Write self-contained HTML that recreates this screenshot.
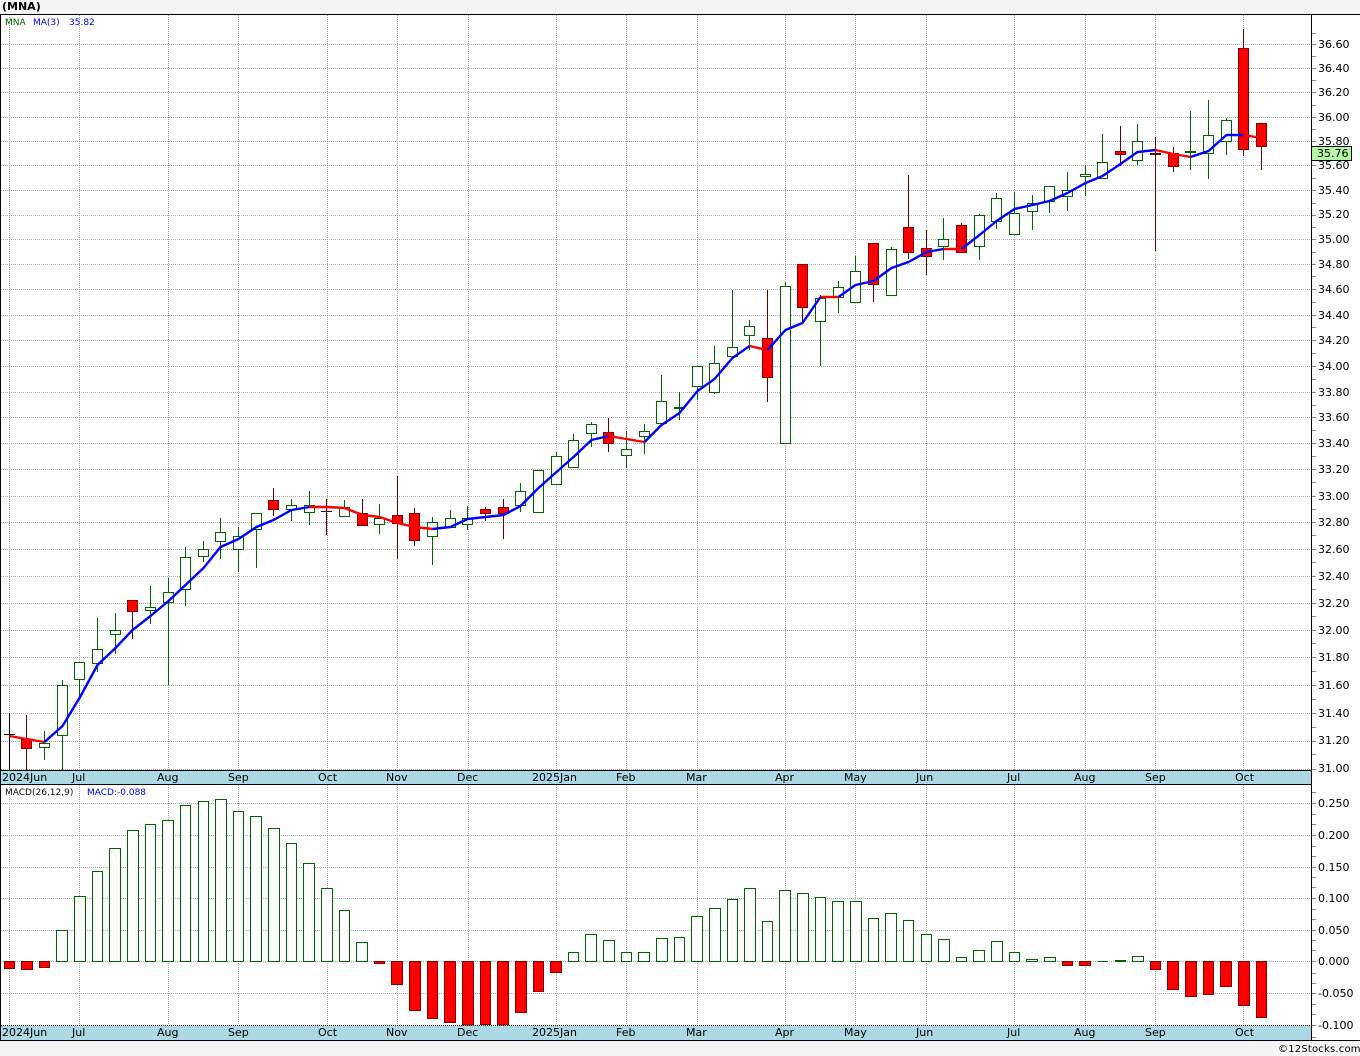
<!DOCTYPE html>
<html lang="en"><head><meta charset="utf-8"><title>MNA</title>
<style>
html,body{margin:0;padding:0;background:#f4f4f4;width:1360px;height:1056px;overflow:hidden}
svg{display:block}
text{font-family:"DejaVu Sans","Liberation Sans",sans-serif;font-size:11px;fill:#000}
.s{font-size:9px}
</style></head><body>
<svg width="1360" height="1056" viewBox="0 0 1360 1056" xmlns="http://www.w3.org/2000/svg">
<rect x="0" y="0" width="1360" height="1056" fill="#f4f4f4"/>
<rect x="0" y="14" width="1360" height="1027" fill="#fff"/>
<g shape-rendering="crispEdges">
<path fill="none" stroke="#aaa" stroke-dasharray="1 1" d="M1 44.5H1311M1 68.5H1311M1 92.5H1311M1 117.5H1311M1 141.5H1311M1 165.5H1311M1 190.5H1311M1 215.5H1311M1 239.5H1311M1 264.5H1311M1 289.5H1311M1 315.5H1311M1 340.5H1311M1 366.5H1311M1 392.5H1311M1 417.5H1311M1 443.5H1311M1 469.5H1311M1 496.5H1311M1 522.5H1311M1 549.5H1311M1 576.5H1311M1 603.5H1311M1 630.5H1311M1 657.5H1311M1 685.5H1311M1 713.5H1311M1 741.5H1311M1 769.5H1311M1 803.5H1311M1 835.5H1311M1 867.5H1311M1 898.5H1311M1 930.5H1311M1 961.5H1311M1 993.5H1311"/>
<path fill="none" stroke="#aaa" stroke-dasharray="1 1" d="M9.5 15V770M79.5 15V770M168.5 15V770M238.5 15V770M327.5 15V770M397.5 15V770M468.5 15V770M556.5 15V770M626.5 15V770M697.5 15V770M785.5 15V770M855.5 15V770M926.5 15V770M1014.5 15V770M1085.5 15V770M1155.5 15V770M1243.5 15V770M9.5 785V1025M79.5 785V1025M168.5 785V1025M238.5 785V1025M327.5 785V1025M397.5 785V1025M468.5 785V1025M556.5 785V1025M626.5 785V1025M697.5 785V1025M785.5 785V1025M855.5 785V1025M926.5 785V1025M1014.5 785V1025M1085.5 785V1025M1155.5 785V1025M1243.5 785V1025"/>
<path fill="none" stroke="#888" d="M1312 33.5H1316M1312 44.5H1316M1312 56.5H1316M1312 68.5H1316M1312 80.5H1316M1312 92.5H1316M1312 105.5H1316M1312 117.5H1316M1312 129.5H1316M1312 141.5H1316M1312 165.5H1316M1312 178.5H1316M1312 190.5H1316M1312 203.5H1316M1312 215.5H1316M1312 227.5H1316M1312 239.5H1316M1312 252.5H1316M1312 264.5H1316M1312 276.5H1316M1312 289.5H1316M1312 302.5H1316M1312 315.5H1316M1312 327.5H1316M1312 340.5H1316M1312 353.5H1316M1312 366.5H1316M1312 379.5H1316M1312 392.5H1316M1312 405.5H1316M1312 417.5H1316M1312 430.5H1316M1312 443.5H1316M1312 456.5H1316M1312 469.5H1316M1312 482.5H1316M1312 496.5H1316M1312 509.5H1316M1312 522.5H1316M1312 535.5H1316M1312 549.5H1316M1312 562.5H1316M1312 576.5H1316M1312 589.5H1316M1312 603.5H1316M1312 616.5H1316M1312 630.5H1316M1312 643.5H1316M1312 657.5H1316M1312 671.5H1316M1312 685.5H1316M1312 699.5H1316M1312 713.5H1316M1312 727.5H1316M1312 741.5H1316M1312 754.5H1316M1312 769.5H1316M1312 792.5H1316M1312 803.5H1316M1312 814.5H1316M1312 824.5H1316M1312 835.5H1316M1312 846.5H1316M1312 856.5H1316M1312 867.5H1316M1312 877.5H1316M1312 887.5H1316M1312 898.5H1316M1312 909.5H1316M1312 919.5H1316M1312 930.5H1316M1312 940.5H1316M1312 950.5H1316M1312 961.5H1316M1312 973.5H1316M1312 983.5H1316M1312 993.5H1316M1312 1004.5H1316M1312 1014.5H1316M1312 1025.5H1316M1312 1037.5H1316"/>
<!-- wicks -->
<path fill="none" stroke="#000" d="M9.5 713V770M4 734.5H15"/>
<path fill="none" stroke="#006400" d="M44.5 731V760M62.5 680V770M79.5 662V698M97.5 618V672M115.5 613V654M150.5 586V624M168.5 578V685M185.5 547V606M203.5 541V562M220.5 518V559M238.5 527V572M256.5 513V568M291.5 499V521M309.5 491V525M344.5 500V516M379.5 504V534M432.5 517V565M450.5 510V527M467.5 506V530M520.5 483V512M538.5 470V512M556.5 452V484M573.5 434V467M591.5 422V447M626.5 431V468M644.5 424V454M661.5 375V424M679.5 392V420M697.5 366V400M714.5 346V394M732.5 290V356M749.5 320V350M785.5 282V443M820.5 295V366M838.5 281V313M855.5 256V302M891.5 247V295M943.5 218V260M979.5 214V260M996.5 193V229M1014.5 192V234M1032.5 195V230M1049.5 186V213M1067.5 172V211M1085.5 165V196M1102.5 134V178M1137.5 124V165M1190.5 111V170M1208.5 100V179M1226.5 118V155"/>
<path fill="none" stroke="#600000" d="M26.5 715V770M132.5 600V639M273.5 488V516M326.5 499V535M362.5 499V525M397.5 476V559M414.5 508V546M485.5 507V521M503.5 499V539M608.5 418V452M767.5 290V402M802.5 264V322M873.5 243V302M908.5 175V259M926.5 230V275M961.5 223V252M1120.5 126V166M1155.5 137V251M1173.5 147V172M1243.5 29V156M1261.5 123V170"/>
<!-- hollow bodies -->
<path fill="#fff" stroke="#006400" d="M39.5 743.5h10v4h-10zM57.5 685.5h10v50h-10zM74.5 662.5h10v17h-10zM92.5 649.5h10v14h-10zM110.5 630.5h10v4h-10zM145.5 607.5h10v3h-10zM163.5 592.5h10v10h-10zM180.5 557.5h10v32h-10zM198.5 549.5h10v7h-10zM215.5 532.5h10v9h-10zM233.5 536.5h10v13h-10zM251.5 513.5h10v16h-10zM286.5 505.5h10v4h-10zM304.5 505.5h10v7h-10zM339.5 507.5h10v9h-10zM374.5 518.5h10v6h-10zM427.5 522.5h10v14h-10zM445.5 518.5h10v9h-10zM462.5 518.5h10v6h-10zM515.5 491.5h10v14h-10zM533.5 470.5h10v42h-10zM551.5 456.5h10v28h-10zM568.5 440.5h10v27h-10zM586.5 424.5h10v9h-10zM621.5 449.5h10v6h-10zM639.5 431.5h10v5h-10zM656.5 401.5h10v22h-10zM692.5 366.5h10v20h-10zM709.5 363.5h10v29h-10zM727.5 347.5h10v9h-10zM744.5 326.5h10v9h-10zM780.5 286.5h10v157h-10zM815.5 298.5h10v23h-10zM833.5 287.5h10v10h-10zM850.5 271.5h10v31h-10zM886.5 249.5h10v46h-10zM938.5 239.5h10v7h-10zM974.5 215.5h10v31h-10zM991.5 198.5h10v23h-10zM1009.5 213.5h10v21h-10zM1027.5 203.5h10v8h-10zM1044.5 186.5h10v15h-10zM1062.5 190.5h10v6h-10zM1080.5 174.5h10v2h-10zM1097.5 162.5h10v16h-10zM1132.5 141.5h10v19h-10zM1203.5 135.5h10v18h-10zM1221.5 120.5h10v21h-10z"/>
<rect x="674" y="407" width="11" height="2" fill="#006400"/>
<rect x="1185" y="151" width="11" height="2" fill="#006400"/>
<!-- red bodies -->
<path fill="#f00" stroke="#800000" d="M21.5 739.5h10v9h-10zM127.5 600.5h10v11h-10zM268.5 500.5h10v9h-10zM357.5 513.5h10v12h-10zM392.5 515.5h10v8h-10zM409.5 513.5h10v27h-10zM480.5 509.5h10v4h-10zM498.5 507.5h10v6h-10zM603.5 432.5h10v11h-10zM762.5 338.5h10v39h-10zM797.5 264.5h10v43h-10zM868.5 243.5h10v41h-10zM903.5 227.5h10v25h-10zM921.5 248.5h10v8h-10zM956.5 225.5h10v27h-10zM1115.5 151.5h10v3h-10zM1168.5 153.5h10v13h-10zM1238.5 48.5h10v101h-10zM1256.5 123.5h10v23h-10z"/>
<rect x="321" y="511" width="11" height="1" fill="#600000"/>
<rect x="1150" y="153" width="11" height="2" fill="#600000"/>
<!-- MACD -->
<path fill="#fff" stroke="#006400" d="M56.5 930.5h11V961.5h-11zM74.5 896.5h11V961.5h-11zM92.5 871.5h10V961.5h-10zM109.5 848.5h11V961.5h-11zM127.5 830.5h11V961.5h-11zM145.5 824.5h10V961.5h-10zM162.5 820.5h11V961.5h-11zM180.5 805.5h10V961.5h-10zM198.5 801.5h10V961.5h-10zM215.5 799.5h11V961.5h-11zM233.5 811.5h10V961.5h-10zM250.5 816.5h11V961.5h-11zM268.5 828.5h11V961.5h-11zM286.5 843.5h10V961.5h-10zM303.5 863.5h11V961.5h-11zM321.5 888.5h11V961.5h-11zM339.5 910.5h10V961.5h-10zM356.5 942.5h11V961.5h-11zM568.5 952.5h10V961.5h-10zM585.5 934.5h11V961.5h-11zM603.5 940.5h11V961.5h-11zM621.5 952.5h10V961.5h-10zM638.5 952.5h11V961.5h-11zM656.5 938.5h11V961.5h-11zM674.5 937.5h10V961.5h-10zM691.5 916.5h11V961.5h-11zM709.5 908.5h11V961.5h-11zM727.5 899.5h10V961.5h-10zM744.5 888.5h11V961.5h-11zM762.5 921.5h10V961.5h-10zM779.5 890.5h11V961.5h-11zM797.5 893.5h11V961.5h-11zM815.5 897.5h10V961.5h-10zM832.5 901.5h11V961.5h-11zM850.5 901.5h11V961.5h-11zM868.5 918.5h10V961.5h-10zM885.5 913.5h11V961.5h-11zM903.5 920.5h10V961.5h-10zM921.5 934.5h10V961.5h-10zM938.5 939.5h11V961.5h-11zM956.5 957.5h10V961.5h-10zM973.5 950.5h11V961.5h-11zM991.5 941.5h11V961.5h-11zM1009.5 952.5h10V961.5h-10zM1026.5 959.5h11V961.5h-11zM1044.5 957.5h11V961.5h-11zM1097.5 961.5h10M1115.5 960.5h10V961.5h-10zM1132.5 956.5h11V961.5h-11z"/>
<path fill="#f00" stroke="#800000" d="M4.5 961.5h10V968.5h-10zM21.5 961.5h11V969.5h-11zM39.5 961.5h10V967.5h-10zM374.5 961.5h10V963.5h-10zM391.5 961.5h11V984.5h-11zM409.5 961.5h11V1010.5h-11zM427.5 961.5h10V1018.5h-10zM444.5 961.5h11V1022.5h-11zM462.5 961.5h11V1025h-11zM480.5 961.5h10V1024.5h-10zM497.5 961.5h11V1025h-11zM515.5 961.5h11V1012.5h-11zM533.5 961.5h10V991.5h-10zM550.5 961.5h11V972.5h-11zM1062.5 961.5h10V965.5h-10zM1079.5 961.5h11V965.5h-11zM1150.5 961.5h10V969.5h-10zM1167.5 961.5h11V989.5h-11zM1185.5 961.5h11V996.5h-11zM1203.5 961.5h10V994.5h-10zM1220.5 961.5h11V986.5h-11zM1238.5 961.5h11V1005.5h-11zM1256.5 961.5h10V1017.5h-10z"/>
</g>
<!-- moving average -->
<g fill="none" stroke-width="2.4" stroke-linejoin="round">
<g stroke="#f00">
<polyline points="9.5,736 26.5,739 44.5,742"/>
<polyline points="309.5,507 326.5,507 344.5,508 362.5,515 379.5,517 397.5,523 414.5,527 432.5,529"/>
<polyline points="608.5,436 626.5,439 644.5,442"/>
<polyline points="749.5,346 767.5,350"/>
<polyline points="820.5,297 838.5,297"/>
<polyline points="943.5,249 961.5,249"/>
<polyline points="1155.5,150 1173.5,154 1190.5,157"/>
<polyline points="1243.5,135 1261.5,138"/>
</g>
<g stroke="#00f">
<polyline points="44.5,742 62.5,726 79.5,698 97.5,665 115.5,648 132.5,630 150.5,616 168.5,601 185.5,585 203.5,568 220.5,547 238.5,539 256.5,527 273.5,520 291.5,510 309.5,507"/>
<polyline points="432.5,529 450.5,527 467.5,519 485.5,517 503.5,515 520.5,506 538.5,488 556.5,472 573.5,457 591.5,440 608.5,436"/>
<polyline points="644.5,442 661.5,425 679.5,413 697.5,391 714.5,379 732.5,358 749.5,346"/>
<polyline points="767.5,350 785.5,330 802.5,323 820.5,297"/>
<polyline points="838.5,297 855.5,285 873.5,281 891.5,268 908.5,262 926.5,252 943.5,249"/>
<polyline points="961.5,249 979.5,235 996.5,221 1014.5,209 1032.5,205 1049.5,201 1067.5,193 1085.5,183 1102.5,176 1120.5,164 1137.5,152 1155.5,150"/>
<polyline points="1190.5,157 1208.5,151 1226.5,135 1243.5,135"/>
</g>
</g>
<g shape-rendering="crispEdges">
<rect x="1" y="771" width="1310" height="13" fill="#add8e6"/>
<rect x="1" y="1026" width="1310" height="14" fill="#add8e6"/>
<rect x="0" y="14" width="1360" height="1" fill="#000"/>
<rect x="0" y="14" width="1" height="1027" fill="#000"/>
<rect x="1" y="770" width="1311" height="1" fill="#000"/>
<rect x="1" y="784" width="1311" height="1" fill="#000"/>
<rect x="0" y="1040" width="1360" height="1" fill="#000"/>
<path fill="none" stroke="#000" stroke-dasharray="1 1" d="M1 1025.5H1311"/>
<rect x="1311" y="14" width="1" height="1027" fill="#000"/>
</g>
<!-- header -->
<text x="2" y="10" style="font-weight:700">(MNA)</text>
<text class="s" x="5" y="25" style="fill:#006400">MNA</text>
<text class="s" x="33" y="25" style="fill:#0000e0">MA(3)</text>
<text class="s" x="69" y="25" style="fill:#0000e0">35.82</text>
<text class="s" x="5" y="795" style="fill:#111">MACD(26,12,9)</text>
<text class="s" x="87" y="795" style="fill:#0000e0">MACD:-0.088</text>
<!-- date labels -->
<text x="2" y="781">2024Jun</text><text x="72" y="781">Jul</text><text x="157" y="781">Aug</text><text x="228" y="781">Sep</text><text x="318" y="781">Oct</text><text x="386" y="781">Nov</text><text x="457" y="781">Dec</text><text x="532" y="781">2025Jan</text><text x="616" y="781">Feb</text><text x="686" y="781">Mar</text><text x="775" y="781">Apr</text><text x="844" y="781">May</text><text x="916" y="781">Jun</text><text x="1007" y="781">Jul</text><text x="1074" y="781">Aug</text><text x="1145" y="781">Sep</text><text x="1235" y="781">Oct</text>
<text x="2" y="1036">2024Jun</text><text x="72" y="1036">Jul</text><text x="157" y="1036">Aug</text><text x="228" y="1036">Sep</text><text x="318" y="1036">Oct</text><text x="386" y="1036">Nov</text><text x="457" y="1036">Dec</text><text x="532" y="1036">2025Jan</text><text x="616" y="1036">Feb</text><text x="686" y="1036">Mar</text><text x="775" y="1036">Apr</text><text x="844" y="1036">May</text><text x="916" y="1036">Jun</text><text x="1007" y="1036">Jul</text><text x="1074" y="1036">Aug</text><text x="1145" y="1036">Sep</text><text x="1235" y="1036">Oct</text>
<!-- price labels -->
<text x="1318" y="48">36.60</text><text x="1318" y="72">36.40</text><text x="1318" y="96">36.20</text><text x="1318" y="121">36.00</text><text x="1318" y="145">35.80</text><text x="1318" y="169">35.60</text><text x="1318" y="194">35.40</text><text x="1318" y="218">35.20</text><text x="1318" y="243">35.00</text><text x="1318" y="268">34.80</text><text x="1318" y="293">34.60</text><text x="1318" y="319">34.40</text><text x="1318" y="344">34.20</text><text x="1318" y="370">34.00</text><text x="1318" y="396">33.80</text><text x="1318" y="421">33.60</text><text x="1318" y="447">33.40</text><text x="1318" y="473">33.20</text><text x="1318" y="500">33.00</text><text x="1318" y="526">32.80</text><text x="1318" y="553">32.60</text><text x="1318" y="580">32.40</text><text x="1318" y="607">32.20</text><text x="1318" y="634">32.00</text><text x="1318" y="661">31.80</text><text x="1318" y="689">31.60</text><text x="1318" y="717">31.40</text><text x="1318" y="744">31.20</text><text x="1318" y="772">31.00</text>
<rect x="1311.5" y="146.5" width="40" height="14" fill="#b4f5a6" stroke="#000" shape-rendering="crispEdges"/>
<text x="1317" y="157">35.76</text>
<!-- macd labels -->
<text x="1318" y="807">0.250</text><text x="1318" y="839">0.200</text><text x="1318" y="871">0.150</text><text x="1318" y="902">0.100</text><text x="1318" y="934">0.050</text><text x="1318" y="965">0.000</text><text x="1318" y="997">-0.050</text><text x="1318" y="1029">-0.100</text>
<text x="1278" y="1052" style="font-size:10px;letter-spacing:.2px">©12Stocks.com</text>
</svg>
</body></html>
